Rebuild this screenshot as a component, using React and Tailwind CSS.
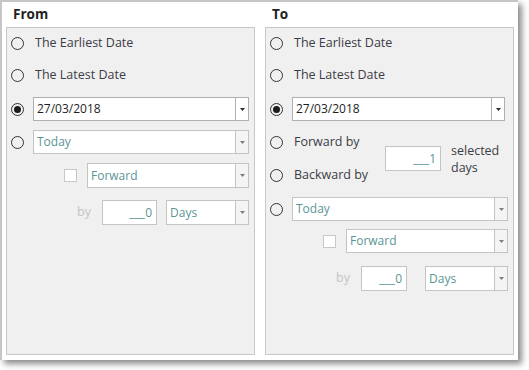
const font = { fontFamily: '"Open Sans", "Noto Sans", sans-serif' };

const Radio = ({ checked }) => (
  <span className="w-[13px] h-[13px] shrink-0 rounded-full border border-[#333] flex items-center justify-center">
    {checked && <span className="w-[7px] h-[7px] rounded-full bg-[#1c1c1c]" />}
  </span>
);

const Caret = ({ disabled }) => (
  <svg width="5" height="3" viewBox="0 0 5 3">
    <path d="M0 0h5L2.5 3z" fill={disabled ? "#7c7c7c" : "#2a2a2a"} />
  </svg>
);

const Combo = ({ value, disabled, className }) => (
  <div
    className={`flex bg-white border ${
      disabled ? "border-[#c4c4c4]" : "border-[#b0b0b0]"
    } ${className}`}
  >
    <div
      className={`flex-1 flex items-center pl-[3px] text-[12px] ${
        disabled ? "text-[#5b9595]" : "text-[#1e1e1e]"
      }`}
    >
      {value}
    </div>
    <div
      className={`w-[13px] flex items-center justify-center border-l ${
        disabled ? "border-[#c4c4c4] bg-[#f4f4f4]" : "border-[#b0b0b0] bg-white"
      }`}
    >
      <Caret disabled={disabled} />
    </div>
  </div>
);

const NumBox = ({ value, className }) => (
  <div
    className={`flex items-center justify-end pr-[4px] bg-white border border-[#c4c4c4] text-[12px] text-[#5b9595] ${className}`}
  >
    {value}
  </div>
);

const Label = ({ children, className = "" }) => (
  <span className={`text-[12.5px] text-[#3c3c46] ${className}`}>{children}</span>
);

const Check = () => (
  <span className="w-[13px] h-[13px] shrink-0 bg-white border border-[#c8c8c8]" />
);

export default function App() {
  return (
    <div className="w-[529px] h-[370px] bg-white" style={font}>
      <div className="w-[518px] h-[360px] bg-white border-t-2 border-l-2 border-[#c6c6c6] shadow-[4px_4px_6px_rgba(0,0,0,0.45)] flex gap-[10px] pl-[4px] pb-[5px]">
        {/* From */}
        <div className="w-[249px] flex flex-col">
          <div className="h-[25px] flex items-center pl-[7px] text-[13.5px] font-bold text-[#222]">
            From
          </div>
          <div className="flex-1 border border-[#c8c8c8] bg-[#f0f0f0] pl-[4px] flex flex-col">
            <div className="mt-[3px] h-[24px] flex items-center">
              <Radio />
              <Label className="ml-[11px]">The Earliest Date</Label>
            </div>
            <div className="mt-[8px] h-[24px] flex items-center">
              <Radio />
              <Label className="ml-[11px]">The Latest Date</Label>
            </div>
            <div className="mt-[10px] h-[24px] flex items-center">
              <Radio checked />
              <Combo value="27/03/2018" className="ml-[9px] w-[216px] h-[24px]" />
            </div>
            <div className="mt-[9px] h-[24px] flex items-center">
              <Radio />
              <Combo value="Today" disabled className="ml-[9px] w-[216px] h-[24px]" />
            </div>
            <div className="mt-[9px] h-[25px] flex items-center pl-[53px]">
              <Check />
              <Combo value="Forward" disabled className="ml-[10px] w-[162px] h-[25px]" />
            </div>
            <div className="mt-[12px] h-[25px] flex items-center pl-[66px]">
              <span className="text-[12.5px] text-[#c4c4c4] w-[25px]">by</span>
              <NumBox value="___0" className="w-[55px] h-[25px]" />
              <Combo value="Days" disabled className="ml-[9px] w-[83px] h-[25px]" />
            </div>
          </div>
        </div>

        {/* To */}
        <div className="w-[249px] flex flex-col">
          <div className="h-[25px] flex items-center pl-[7px] text-[13.5px] font-bold text-[#222]">
            To
          </div>
          <div className="flex-1 border border-[#c8c8c8] bg-[#f0f0f0] pl-[4px] flex flex-col">
            <div className="mt-[3px] h-[24px] flex items-center">
              <Radio />
              <Label className="ml-[11px]">The Earliest Date</Label>
            </div>
            <div className="mt-[8px] h-[24px] flex items-center">
              <Radio />
              <Label className="ml-[11px]">The Latest Date</Label>
            </div>
            <div className="mt-[10px] h-[24px] flex items-center">
              <Radio checked />
              <Combo value="27/03/2018" className="ml-[9px] w-[213px] h-[24px]" />
            </div>
            <div className="mt-[9px] flex items-center">
              <div className="flex flex-col gap-[9px] w-[115px]">
                <div className="h-[24px] flex items-center">
                  <Radio />
                  <Label className="ml-[11px]">Forward by</Label>
                </div>
                <div className="h-[24px] flex items-center">
                  <Radio />
                  <Label className="ml-[11px]">Backward by</Label>
                </div>
              </div>
              <NumBox value="___1" className="w-[56px] h-[25px]" />
              <div className="ml-[10px] flex flex-col leading-[17px]">
                <Label>selected</Label>
                <Label>days</Label>
              </div>
            </div>
            <div className="mt-[10px] h-[24px] flex items-center">
              <Radio />
              <Combo value="Today" disabled className="ml-[9px] w-[216px] h-[24px]" />
            </div>
            <div className="mt-[8px] h-[24px] flex items-center pl-[53px]">
              <Check />
              <Combo value="Forward" disabled className="ml-[10px] w-[162px] h-[24px]" />
            </div>
            <div className="mt-[13px] h-[25px] flex items-center pl-[66px]">
              <span className="text-[12.5px] text-[#c4c4c4] w-[25px]">by</span>
              <NumBox value="___0" className="w-[46px] h-[25px]" />
              <Combo value="Days" disabled className="ml-[18px] w-[83px] h-[25px]" />
            </div>
          </div>
        </div>
      </div>
    </div>
  );
}
